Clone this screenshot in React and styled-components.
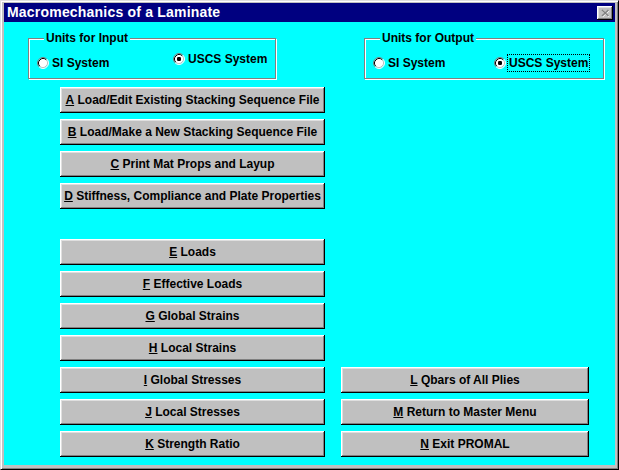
import React from 'react';
import styled, { createGlobalStyle } from 'styled-components';

const GlobalStyle = createGlobalStyle`
    html, body {
        margin:0;
        padding:0;
    }
    body {
        font-family:"Liberation Sans", Arial, sans-serif;
    }
`;

const Window = styled.div`
    width:619px;
    height:470px;
    box-sizing:border-box;
    background-color:#c0c0c0;
    border:1px solid;
    border-color:#dfdfdf #000 #000 #dfdfdf;
    box-shadow:inset 1px 1px 0 #fff, inset -1px -1px 0 #808080;
    padding:2px 3px 4px 3px;
    display:flex;
    flex-direction:column;
`;

const TitleBar = styled.div`
    height:19px;
    flex:none;
    background-color:#000080;
    display:flex;
    align-items:center;
    justify-content:space-between;
    padding:0 2px 0 3px;
    .caption {
        color:#fff;
        font-size:14px;
        font-weight:700;
        letter-spacing:0.2px;
        line-height:19px;
    }
`;

const CloseButton = styled.div`
    width:16px;
    height:14px;
    box-sizing:border-box;
    background-color:#c0c0c0;
    box-shadow:inset -1px -1px 0 #000, inset 1px 1px 0 #fff, inset -2px -2px 0 #808080, inset 2px 2px 0 #dfdfdf;
    display:flex;
    align-items:center;
    justify-content:center;
`;

const Client = styled.div`
    flex:1;
    background-color:#00ffff;
    padding-top:9px;
`;

const TopRow = styled.div`
    display:flex;
    justify-content:space-between;
    padding:0 11px 0 24px;
`;

const Group = styled.fieldset`
    margin:0;
    width:${p => p.$width}px;
    box-sizing:border-box;
    border:1px solid #808080;
    box-shadow:inset 1px 1px 0 #fff, 1px 1px 0 #fff;
    padding:9px 8px 6px 8px;
    min-inline-size:0;
    legend {
        margin-left:7px;
        padding:0 2px;
        background-color:#00ffff;
        font-size:12px;
        font-weight:700;
        line-height:14px;
        color:#000;
    }
`;

const RadioRow = styled.div`
    display:flex;
    align-items:flex-start;
    height:18px;
`;

const RadioItem = styled.div`
    display:flex;
    flex:none;
    align-items:center;
    gap:1px;
    width:${p => (p.$width ? `${p.$width}px` : 'auto')};
    margin-top:${p => (p.$up ? -p.$up : 0)}px;
    font-size:12px;
    font-weight:700;
    color:#000;
    white-space:nowrap;
    .label {
        line-height:14px;
        padding:1px;
        border:1px ${p => (p.$focus ? 'dotted #000' : 'solid transparent')};
    }
`;

const ButtonGrid = styled.div`
    margin-top:8px;
    padding-left:56px;
    display:grid;
    grid-template-columns:265px 248px;
    grid-template-rows:repeat(4, 26px) 18px repeat(7, 26px);
    column-gap:16px;
    row-gap:6px;
`;

const MenuButton = styled.div`
    grid-column:${p => p.$col};
    grid-row:${p => p.$row};
    background-color:#c0c0c0;
    box-shadow:inset -1px -1px 0 #000, inset 1px 1px 0 #fff, inset -2px -2px 0 #808080, inset 2px 2px 0 #dfdfdf;
    display:flex;
    align-items:center;
    justify-content:center;
    font-size:12px;
    font-weight:700;
    color:#000;
    white-space:nowrap;
    padding-bottom:1px;
    box-sizing:border-box;
    u {
        text-underline-offset:1px;
    }
`;

const Radio = ({ checked }) => (
    <svg width="12" height="12" viewBox="0 0 12 12">
        <circle cx="6" cy="6" r="5" fill="#fff" />
        <path d="M2.11 9.89 A5.5 5.5 0 0 1 9.89 2.11" stroke="#808080" fill="none" />
        <path d="M9.89 2.11 A5.5 5.5 0 0 1 2.11 9.89" stroke="#fff" fill="none" />
        <path d="M2.82 9.18 A4.5 4.5 0 0 1 9.18 2.82" stroke="#000" fill="none" />
        <path d="M9.18 2.82 A4.5 4.5 0 0 1 2.82 9.18" stroke="#c0c0c0" fill="none" />
        {checked && <rect x="4" y="4" width="4" height="4" rx="1.2" fill="#000" />}
    </svg>
);

const CloseGlyph = () => (
    <svg width="9" height="8" viewBox="0 0 9 8">
        <path d="M1.5 1.5 L8 7.5 M8 1.5 L1.5 7.5" stroke="#fff" strokeWidth="1.6" />
        <path d="M1 1 L7.5 7 M7.5 1 L1 7" stroke="#808080" strokeWidth="1.6" />
    </svg>
);

const buttons = [
    { key: 'A', text: 'Load/Edit Existing Stacking Sequence File', col: 1, row: 1 },
    { key: 'B', text: 'Load/Make a New Stacking Sequence File', col: 1, row: 2 },
    { key: 'C', text: 'Print Mat Props and Layup', col: 1, row: 3 },
    { key: 'D', text: 'Stiffness, Compliance and Plate Properties', col: 1, row: 4 },
    { key: 'E', text: 'Loads', col: 1, row: 6 },
    { key: 'F', text: 'Effective Loads', col: 1, row: 7 },
    { key: 'G', text: 'Global Strains', col: 1, row: 8 },
    { key: 'H', text: 'Local Strains', col: 1, row: 9 },
    { key: 'I', text: 'Global Stresses', col: 1, row: 10 },
    { key: 'J', text: 'Local Stresses', col: 1, row: 11 },
    { key: 'K', text: 'Strength Ratio', col: 1, row: 12 },
    { key: 'L', text: 'Qbars of All Plies', col: 2, row: 10 },
    { key: 'M', text: 'Return to Master Menu', col: 2, row: 11 },
    { key: 'N', text: 'Exit PROMAL', col: 2, row: 12 },
];

const App = () => {
    return (
        <>
            <GlobalStyle />
            <Window>
                <TitleBar>
                    <span className="caption">Macromechanics of a Laminate</span>
                    <CloseButton><CloseGlyph /></CloseButton>
                </TitleBar>
                <Client>
                    <TopRow>
                        <Group $width={248}>
                            <legend>Units for Input</legend>
                            <RadioRow>
                                <RadioItem $width={136}>
                                    <Radio />
                                    <span className="label">SI System</span>
                                </RadioItem>
                                <RadioItem $up={4}>
                                    <Radio checked />
                                    <span className="label">USCS System</span>
                                </RadioItem>
                            </RadioRow>
                        </Group>
                        <Group $width={240}>
                            <legend>Units for Output</legend>
                            <RadioRow>
                                <RadioItem $width={121}>
                                    <Radio />
                                    <span className="label">SI System</span>
                                </RadioItem>
                                <RadioItem $focus>
                                    <Radio checked />
                                    <span className="label">USCS System</span>
                                </RadioItem>
                            </RadioRow>
                        </Group>
                    </TopRow>
                    <ButtonGrid>
                        {buttons.map(b => (
                            <MenuButton key={b.key} $col={b.col} $row={b.row}>
                                <u>{b.key}</u>&nbsp;{b.text}
                            </MenuButton>
                        ))}
                    </ButtonGrid>
                </Client>
            </Window>
        </>
    );
};

export default App;
